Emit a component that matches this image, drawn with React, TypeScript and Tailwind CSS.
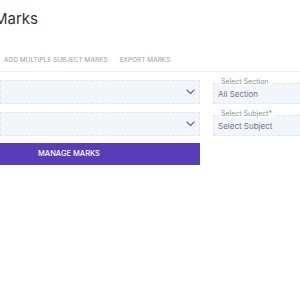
import React from 'react';

function Chevron() {
  return (
    <svg width="9" height="6" viewBox="0 0 9 6" fill="none" className="shrink-0">
      <path d="M1 1l3.5 3.5L8 1" stroke="#6b7280" strokeWidth="1.2" strokeLinecap="round" strokeLinejoin="round" />
    </svg>
  );
}

function FloatingSelect({ label, value }: { label: string; value: string }) {
  return (
    <div className="relative">
      <span className="absolute -top-[5px] left-[6px] bg-white px-[2px] text-[7px] leading-[8px] text-[#8a8f98]">
        {label}
      </span>
      <div className="h-[21px] border border-dashed border-[#e3e7ee] bg-[#f2f5f9] flex items-center pl-[4px] text-[8px] text-[#70757e]">
        {value}
      </div>
    </div>
  );
}

export default function App() {
  return (
    <div className="w-[300px] h-[300px] bg-white overflow-hidden font-['Inter',sans-serif]">
      <h1 className="ml-[-6px] pt-[10px] text-[15px] leading-[18px] text-[#333]">Marks</h1>
      <div className="mt-[27px] flex gap-[12px] pl-[4px] text-[6.5px] leading-[10px] uppercase text-[#9a9da3]">
        <span>Add Multiple Subject Marks</span>
        <span>Export Marks</span>
      </div>
      <div className="mt-[6px] border-t border-[#eef0f3]" />
      <div className="mt-[8px] flex gap-[13px]">
        <div className="w-[200px] flex flex-col gap-[8px]">
          <div className="h-[24px] border border-dashed border-[#e3e7ee] bg-[#f2f5f9] flex items-center justify-end pr-[4px]">
            <Chevron />
          </div>
          <div className="h-[24px] border border-dashed border-[#e3e7ee] bg-[#f2f5f9] flex items-center justify-end pr-[4px]">
            <Chevron />
          </div>
          <button className="mt-[-1px] h-[22px] bg-[#583db6] text-white text-[7.5px] font-medium text-left pl-[38px] uppercase">
            Manage Marks
          </button>
        </div>
        <div className="flex-1 mr-[-10px] pt-[3px] flex flex-col gap-[11px]">
          <FloatingSelect label="Select Section" value="All Section" />
          <FloatingSelect label="Select Subject*" value="Select Subject" />
        </div>
      </div>
    </div>
  );
}
